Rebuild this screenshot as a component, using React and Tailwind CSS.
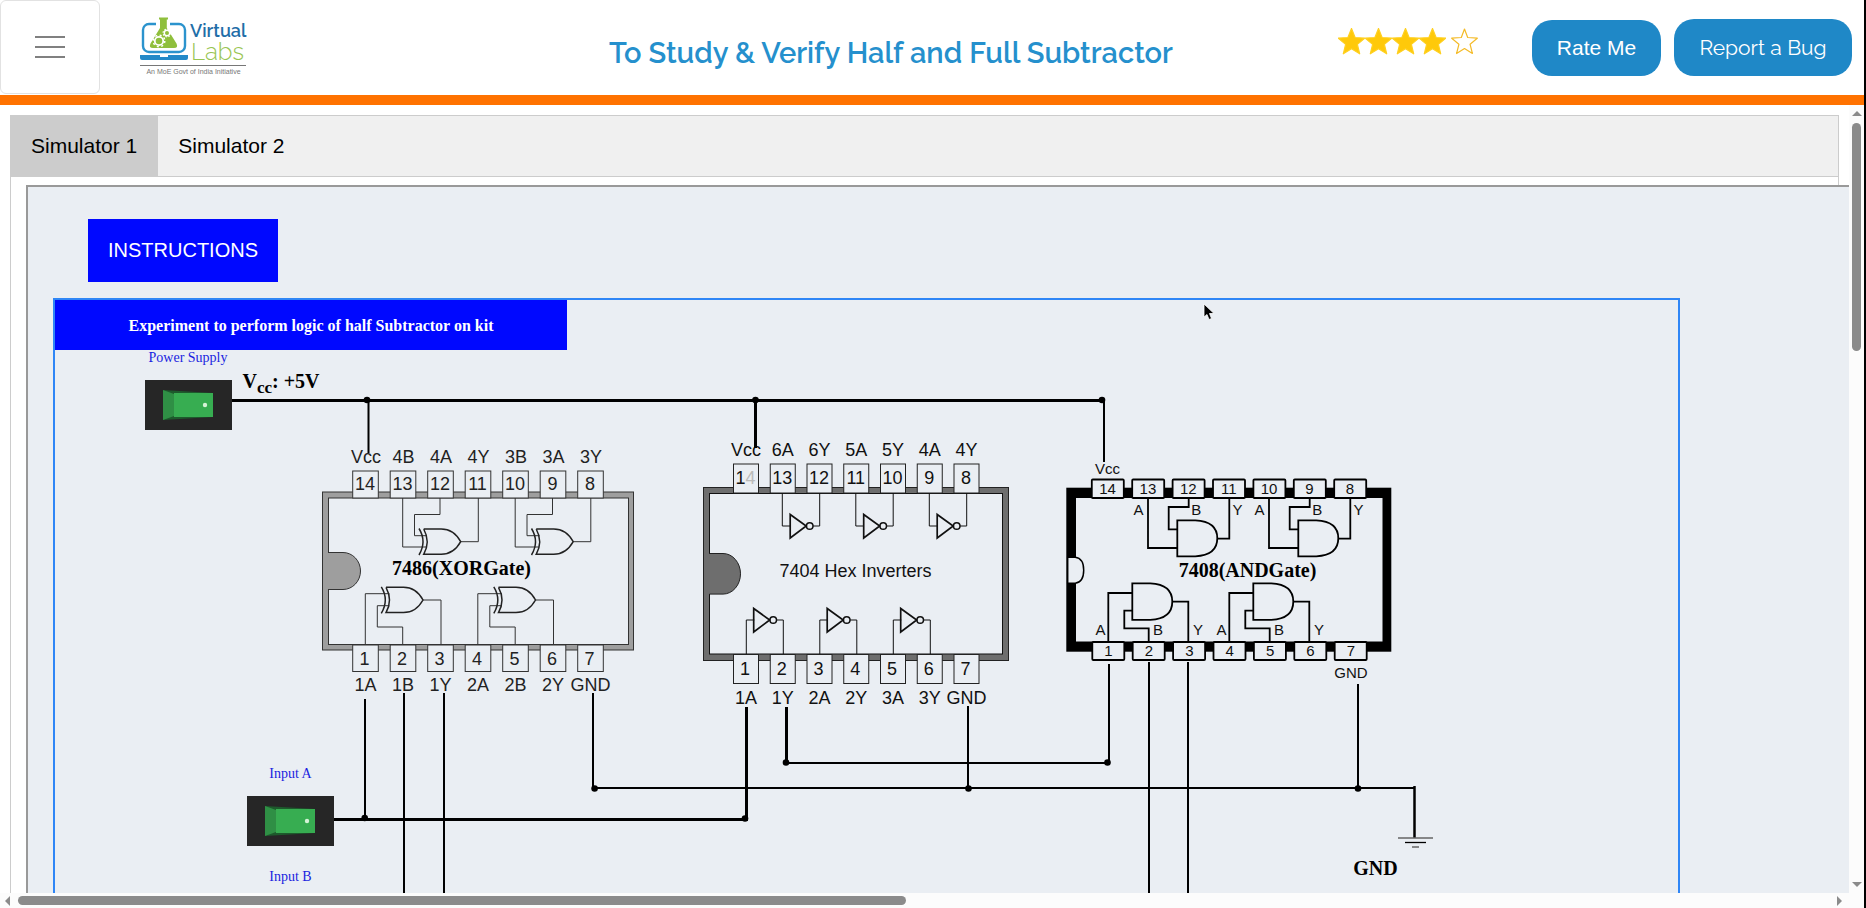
import React, { useState } from "react";

const range = (n) => Array.from({ length: n }, (_, i) => i);

function Logo() {
  return (
    <svg width="112" height="62" viewBox="140 15 112 62" role="img" aria-label="Virtual Labs">
      <rect x="143" y="24" width="42" height="28" rx="6" fill="none" stroke="#2b93cd" strokeWidth="2.4" />
      <rect x="156" y="21" width="14" height="8" fill="#fff" />
      <path d="M140 55h20v2h8v-2h20v3q0 2-2 2h-44q-2 0-2-2z" fill="#2389c8" />
      <path d="M159 17.500h9v2h-1.200v8.500l9.700 15.500q2 4.500-2.500 4.500h-21q-4.500 0-2.500-4.500l9.500-15.500v-8.500h-1z" fill="#8fbf3c" />
      <circle cx="159" cy="41" r="4.200" fill="none" stroke="#fff" strokeWidth="1.800" />
      <circle cx="159" cy="41" r="5.800" fill="none" stroke="#fff" strokeWidth="1.500" strokeDasharray="2 2.550" />
      <circle cx="167" cy="33" r="2.700" fill="none" stroke="#fff" strokeWidth="1.400" />
      <circle cx="167" cy="33" r="3.900" fill="none" stroke="#fff" strokeWidth="1.200" strokeDasharray="1.500 1.560" />
      <g fontFamily="Raleway, Lato, sans-serif">
        <text x="190" y="37" fontSize="18" fontWeight="600" fill="#1f6ea8">Virtual</text>
        <text x="191" y="60" fontSize="24" fontWeight="300" fill="#98c552">Labs</text>
      </g>
      <path d="M140 65.500h106" stroke="#777" />
      <text x="193.500" y="74" textAnchor="middle" fontSize="7" fill="#777" fontFamily="Liberation Sans, sans-serif">
        An MoE Govt of India Initiative
      </text>
    </svg>
  );
}

function Star({ filled }) {
  return (
    <svg width="27" height="27" viewBox="0 0 27 27" aria-hidden="true">
      <path
        d={
          filled
            ? "M13.500 .5l3.600 9 9.700.7-7.400 6.200 2.300 9.400-8.200-5.100-8.200 5.100 2.300-9.400-7.400-6.200 9.700-.7z"
            : "M13.500 1l3.200 8.500 9.600.7-7.200 6.100 2.300 9.200-7.900-5-7.900 5 2.300-9.200-7.200-6.100 9.600-.7z"
        }
        fill={filled ? "#ffc90a" : "#fff"}
        stroke={filled ? "#ffd021" : "#f4bb28"}
        strokeWidth="1.200"
        strokeLinejoin="round"
      />
    </svg>
  );
}

function Switch({ className, labelId }) {
  const [on, setOn] = useState(true);
  return (
    <button
      type="button"
      aria-pressed={on}
      aria-labelledby={labelId}
      onClick={() => setOn(!on)}
      className={`absolute h-[50px] w-[87px] bg-[#262626] ${className}`}
    >
      <svg width="87" height="50" viewBox="0 0 87 50" className="block">
        <path d="M18 10l50 3v24l-50 3z" fill="#1d5a2c" />
        <path d="M18 10l11 4v22l-11 4z" fill="#2f8f45" />
        <path d="M29 13h39v24h-39z" fill="#37ad51" />
        <circle cx="60" cy="25" r="2.200" fill="#d5f3d6" />
      </svg>
    </button>
  );
}

function XorChip() {
  const top = ["Vcc", "4B", "4A", "4Y", "3B", "3A", "3Y"];
  const bottom = ["1A", "1B", "1Y", "2A", "2B", "2Y", "GND"];
  const gate = "M423.700 529h17.500q12.500 0 19.500 12.700q-7 12.600-19.500 12.600h-17.500q7-12.600 0-25.300M419 528.500q8 13 0 26.500";
  return (
    <g fontSize="18" textAnchor="middle" fill="#222" fontFamily="Liberation Sans, sans-serif">
      <rect x="322.500" y="492" width="311" height="158" fill="#9e9e9e" stroke="#333" />
      <rect x="328.500" y="498" width="300" height="146.500" fill="#eaeef3" stroke="#333" />
      <path d="M328 552.500h15a17.500 18.500 0 0 1 0 37h-15" fill="#9e9e9e" stroke="#333" />
      <path d="M325 553v36h4v-36z" fill="#9e9e9e" />
      {range(7).map((i) => (
        <g key={i}>
          <rect x={352.700 + i * 37.500} y="471" width="25.600" height="27" fill="#eaeef3" stroke="#333" />
          <rect x={352.700 + i * 37.500} y="645" width="25.600" height="26.500" fill="#eaeef3" stroke="#333" />
          <text x={365 + i * 37.500} y="490">{14 - i}</text>
          <text x={364.500 + i * 37.500} y="665">{i + 1}</text>
          <text x={366 + i * 37.500} y="463">{top[i]}</text>
          <text x={365.500 + i * 37.500} y="691">{bottom[i]}</text>
        </g>
      ))}
      <g fill="none" stroke="#333">
        {[0, 112.500].map((dx) => (
          <g key={dx} transform={`translate(${dx} 0)`}>
            <path d="M402.700 498v49h23.500M440 498v16.500h-25.500v21.200h12.500M460.700 541.700h17.600v-43.700" />
            <path d={gate} strokeWidth="1.500" stroke="#222" />
            <path d="M365.300 645v-51.300h24M402.700 645v-18h-25.400v-21.300h12M423 600h18v45" />
            <path d={gate} transform="translate(-37.700 58.300)" strokeWidth="1.500" stroke="#222" />
          </g>
        ))}
      </g>
    </g>
  );
}

function InverterChip() {
  const top = ["Vcc", "6A", "6Y", "5A", "5Y", "4A", "4Y"];
  const bottom = ["1A", "1Y", "2A", "2Y", "3A", "3Y", "GND"];
  return (
    <g fontSize="18" textAnchor="middle" fill="#111" fontFamily="Liberation Sans, sans-serif">
      <rect x="703.500" y="487.500" width="305" height="173" fill="#6e6e6e" stroke="#222" />
      <rect x="709.500" y="493.500" width="293" height="160.500" fill="#eaeef3" stroke="#111" />
      <path d="M709 553.500h14a17.500 20.300 0 0 1 0 40.600h-14" fill="#6e6e6e" stroke="#222" />
      <path d="M706 554v39.500h4v-39.500z" fill="#6e6e6e" />
      {range(7).map((i) => (
        <g key={i}>
          <rect x={733.500 + i * 36.750} y="464" width="25" height="29" fill="#eaeef3" stroke="#222" />
          <rect x={733.500 + i * 36.750} y="654.500" width="25" height="29" fill="#eaeef3" stroke="#222" />
          <text x={745.500 + i * 36.750} y="484">
            {i === 0 ? (
              <>
                1<tspan fill="#bbb">4</tspan>
              </>
            ) : (
              14 - i
            )}
          </text>
          <text x={745 + i * 36.750} y="675">{i + 1}</text>
          <text x={746 + i * 36.750} y="456">{top[i]}</text>
          <text x={746 + i * 36.750} y="704">{bottom[i]}</text>
        </g>
      ))}
      <text x="855.500" y="577">7404 Hex Inverters</text>
      <g fill="none" stroke="#111">
        {[0, 73.500, 147].map((dx) => (
          <g key={dx} transform={`translate(${dx} 0)`}>
            <path d="M782.300 493v33h8M813 526h6.700v-33M746.300 654v-34h8M776.500 620h6.800v34" />
            <path d="M790.200 514.500v23.500l16-12zM753.700 608.500v23.500l16-12z" strokeWidth="1.700" />
            <circle cx="809.700" cy="526" r="3.300" strokeWidth="1.500" />
            <circle cx="773.200" cy="620" r="3.300" strokeWidth="1.500" />
          </g>
        ))}
      </g>
    </g>
  );
}

function AndChip() {
  return (
    <g fontSize="15" textAnchor="middle" fill="#111" fontFamily="Liberation Sans, sans-serif">
      <rect x="1066.300" y="487.700" width="325" height="164" fill="#000" />
      <rect x="1076" y="498" width="306.500" height="143.500" fill="#eaeef3" />
      <path d="M1067.700 557.300h7.500q8.500 1 8.500 13t-8.500 13h-7.500z" fill="#eaeef3" stroke="#000" strokeWidth="1.500" />
      {range(7).map((i) => (
        <g key={i}>
          <rect x={1091.800 + i * 40.400} y="479.500" width="32" height="18.500" rx="1" fill="#eaeef3" stroke="#000" strokeWidth="1.800" />
          <rect x={1092.300 + i * 40.400} y="642" width="32" height="18" rx="1" fill="#eaeef3" stroke="#000" strokeWidth="1.800" />
          <text x={1107.500 + i * 40.400} y="494">{14 - i}</text>
          <text x={1108.500 + i * 40.400} y="656">{i + 1}</text>
        </g>
      ))}
      <text x="1107.500" y="474">Vcc</text>
      <text x="1351" y="678">GND</text>
      {[0, 121].map((dx) => (
        <g key={dx} transform={`translate(${dx} 0)`}>
          <text x="1138.500" y="515">A</text>
          <text x="1196.300" y="515">B</text>
          <text x="1237.500" y="515">Y</text>
          <text x="1100.500" y="635">A</text>
          <text x="1158" y="635">B</text>
          <text x="1198" y="635">Y</text>
          <g fill="none" stroke="#000" strokeWidth="1.800">
            <path d="M1148 498v50h29M1188.700 498v9h-20v22.300h9M1217 538.700h12.300v-40.700" />
            <path d="M1177.300 520.300h18q22 1 22 18t-22 18h-18z" />
            <path d="M1108.300 642v-49h24M1148.700 642v-13.700h-24.400v-17.600h8M1172.300 601.700h16v40" />
            <path d="M1132.300 583.300h18q22 1 22 18.300t-22 18.300h-18z" />
          </g>
        </g>
      ))}
    </g>
  );
}

function Wires() {
  const dots = [
    [367, 400], [755.500, 400], [1102, 400],
    [364.700, 818], [745, 818.500], [786, 762.500], [1107.500, 762.500],
    [594.600, 788.500], [968.500, 788.500], [1358, 788.500],
  ];
  return (
    <g fill="none" stroke="#000" strokeWidth="2">
      <path d="M232 400.500h871M755.500 400v48M334 819.500h414M746.500 707v114M786.500 707v56" strokeWidth="3" />
      <path d="M368.500 400v53M1104 400v62M365 699v119M404 693v205M444 693v205M593 693v95M593 788h822" />
      <path d="M786 763h322M1109 664v98M1149 662v236M1188 662v236M968 706v82M1358 684v104" />
      <path d="M1414.500 786v52" strokeWidth="2.500" />
      <path d="M1398 838h35M1412 847h7" stroke="#666" strokeWidth="1.500" />
      <path d="M1405 842.500h21" strokeWidth="1.300" />
      {dots.map(([x, y]) => (
        <circle key={`${x}-${y}`} cx={x} cy={y} r="3.300" fill="#000" stroke="none" />
      ))}
    </g>
  );
}

function Circuit() {
  return (
    <svg width="1623" height="598" viewBox="55 300 1623 598" className="block">
      <XorChip />
      <InverterChip />
      <AndChip />
      <Wires />
      <g fontFamily="Liberation Serif, serif" fontSize="14" fill="#1a1fe0" textAnchor="middle">
        <text id="power-label" x="188" y="362">Power Supply</text>
        <text id="a-label" x="290.500" y="778">Input A</text>
        <text id="b-label" x="290.500" y="881">Input B</text>
      </g>
      <g fontFamily="Liberation Serif, serif" fontSize="20" fontWeight="700" fill="#000">
        <text x="242.500" y="388">
          V<tspan dy="5" fontSize="17">cc</tspan>
          <tspan dy="-5">: +5V</tspan>
        </text>
        <text x="461.500" y="575" textAnchor="middle">7486(XORGate)</text>
        <text x="1247.500" y="577" textAnchor="middle">7408(ANDGate)</text>
        <text x="1375.500" y="875" textAnchor="middle">GND</text>
      </g>
    </svg>
  );
}

function Header() {
  return (
    <header className="flex h-[105px] shrink-0 items-start border-b-10 border-[#ff7200] bg-white">
      <button
        type="button"
        aria-label="Menu"
        className="flex h-[94px] w-[100px] shrink-0 flex-col items-center justify-center gap-2 rounded-md border border-[#e2e2e2]"
      >
        <span className="h-0.5 w-[30px] bg-[#808080]" />
        <span className="h-0.5 w-[30px] bg-[#808080]" />
        <span className="h-0.5 w-[30px] bg-[#808080]" />
      </button>
      <a href="#home" className="ml-10 mt-[15px] shrink-0">
        <Logo />
      </a>
      <h1 className="mt-8 flex-1 whitespace-nowrap pl-48 text-center font-[Raleway,Lato,sans-serif] text-[29px] leading-[42px] font-semibold text-[#2590cd]">
        To Study &amp; Verify Half and Full Subtractor
      </h1>
      <div className="mt-7 flex shrink-0" role="img" aria-label="4 out of 5 stars">
        <Star filled />
        <Star filled />
        <Star filled />
        <Star filled />
        <span className="ml-[5px]">
          <Star />
        </span>
      </div>
      <button
        type="button"
        className="mt-5 ml-[54px] h-14 w-[129px] shrink-0 rounded-[20px] bg-[#1f88c7] text-[21px] text-white"
      >
        Rate Me
      </button>
      <button
        type="button"
        className="mt-[19px] mr-3 ml-[13px] h-[57px] w-[178px] shrink-0 rounded-[20px] bg-[#1f88c7] font-[Raleway,Lato,sans-serif] text-[21px] font-normal text-white"
      >
        Report a Bug
      </button>
    </header>
  );
}

function VerticalScrollbar() {
  return (
    <div className="flex w-[15px] shrink-0 flex-col items-center bg-[#fcfcfc] pt-1.5 pb-5" aria-hidden="true">
      <svg width="10" height="6" viewBox="0 0 10 6"><path d="M0 5l5-5 5 5z" fill="#8b8b8b" /></svg>
      <div className="mt-1.5 h-[29.4%] w-[9px] rounded-full bg-[#8b8b8b]" />
      <svg width="10" height="6" viewBox="0 0 10 6" className="mt-auto"><path d="M0 0l5 5 5-5z" fill="#8b8b8b" /></svg>
    </div>
  );
}

function HorizontalScrollbar() {
  return (
    <div className="flex h-[15px] shrink-0 items-center bg-[#fcfcfc] pr-1.5 pl-1" aria-hidden="true">
      <svg width="6" height="10" viewBox="0 0 6 10"><path d="M6 0l-5 5 5 5z" fill="#8b8b8b" /></svg>
      <div className="ml-2 h-[9px] w-[48.3%] rounded-full bg-[#8b8b8b]" />
      <svg width="6" height="10" viewBox="0 0 6 10" className="ml-auto"><path d="M0 0l5 5-5 5z" fill="#8b8b8b" /></svg>
    </div>
  );
}

function SimulatorPane() {
  return (
    <div className="-mr-5 ml-[15px] mt-2 min-h-0 flex-1 overflow-hidden border-t-2 border-l-2 border-[#999] bg-[#eaeef3] pl-[25px]">
      <button type="button" className="mt-8 ml-[35px] block h-[63px] w-[190px] bg-[#0008ff] pb-0.5 text-[20px] text-white">
        INSTRUCTIONS
      </button>
      <div className="relative mt-4 w-[1627px] border-2 border-[#2f86f6]">
        <Circuit />
        <h2 className="absolute top-0 left-0 flex h-[50px] w-[512px] items-center justify-center bg-[#0008ff] pt-0.5 font-[Liberation_Serif,serif] text-[16px] font-bold text-white">
          Experiment to perform logic of half Subtractor on kit
        </h2>
        <Switch labelId="power-label" className="top-20 left-[90px]" />
        <Switch labelId="a-label" className="top-[496px] left-48" />
      </div>
    </div>
  );
}

export default function App() {
  const [tab, setTab] = useState(0);
  return (
    <div className="relative flex h-screen flex-col overflow-hidden border-r-2 border-black bg-white font-[Liberation_Sans,Arial,sans-serif]">
      <Header />
      <main className="flex min-h-0 flex-1">
        <div className="flex min-w-0 flex-1 flex-col">
          <div className="flex min-h-0 flex-1 flex-col overflow-hidden pt-2.5 pr-2.5 pl-2.5">
            <div role="tablist" className="flex h-[62px] shrink-0 border border-[#ccc] bg-[#f0f0f0]">
              {["Simulator 1", "Simulator 2"].map((name, i) => (
                <button
                  key={name}
                  type="button"
                  role="tab"
                  aria-selected={tab === i}
                  onClick={() => setTab(i)}
                  className={`pr-[21px] pl-5 text-[21px] text-black ${tab === i ? "bg-[#ccc]" : ""}`}
                >
                  {name}
                </button>
              ))}
            </div>
            <div className="flex min-h-0 flex-1 flex-col border-x border-[#ccc]">
              <SimulatorPane />
            </div>
          </div>
          <HorizontalScrollbar />
        </div>
        <VerticalScrollbar />
      </main>
      <svg width="12" height="18" viewBox="0 0 12 18" className="absolute top-[303px] left-[1203px]" aria-hidden="true">
        <path d="M1 1v13l3-2.500 2 5 2.500-1-2-5h4.500z" fill="#000" stroke="#fff" strokeWidth=".8" />
      </svg>
    </div>
  );
}
